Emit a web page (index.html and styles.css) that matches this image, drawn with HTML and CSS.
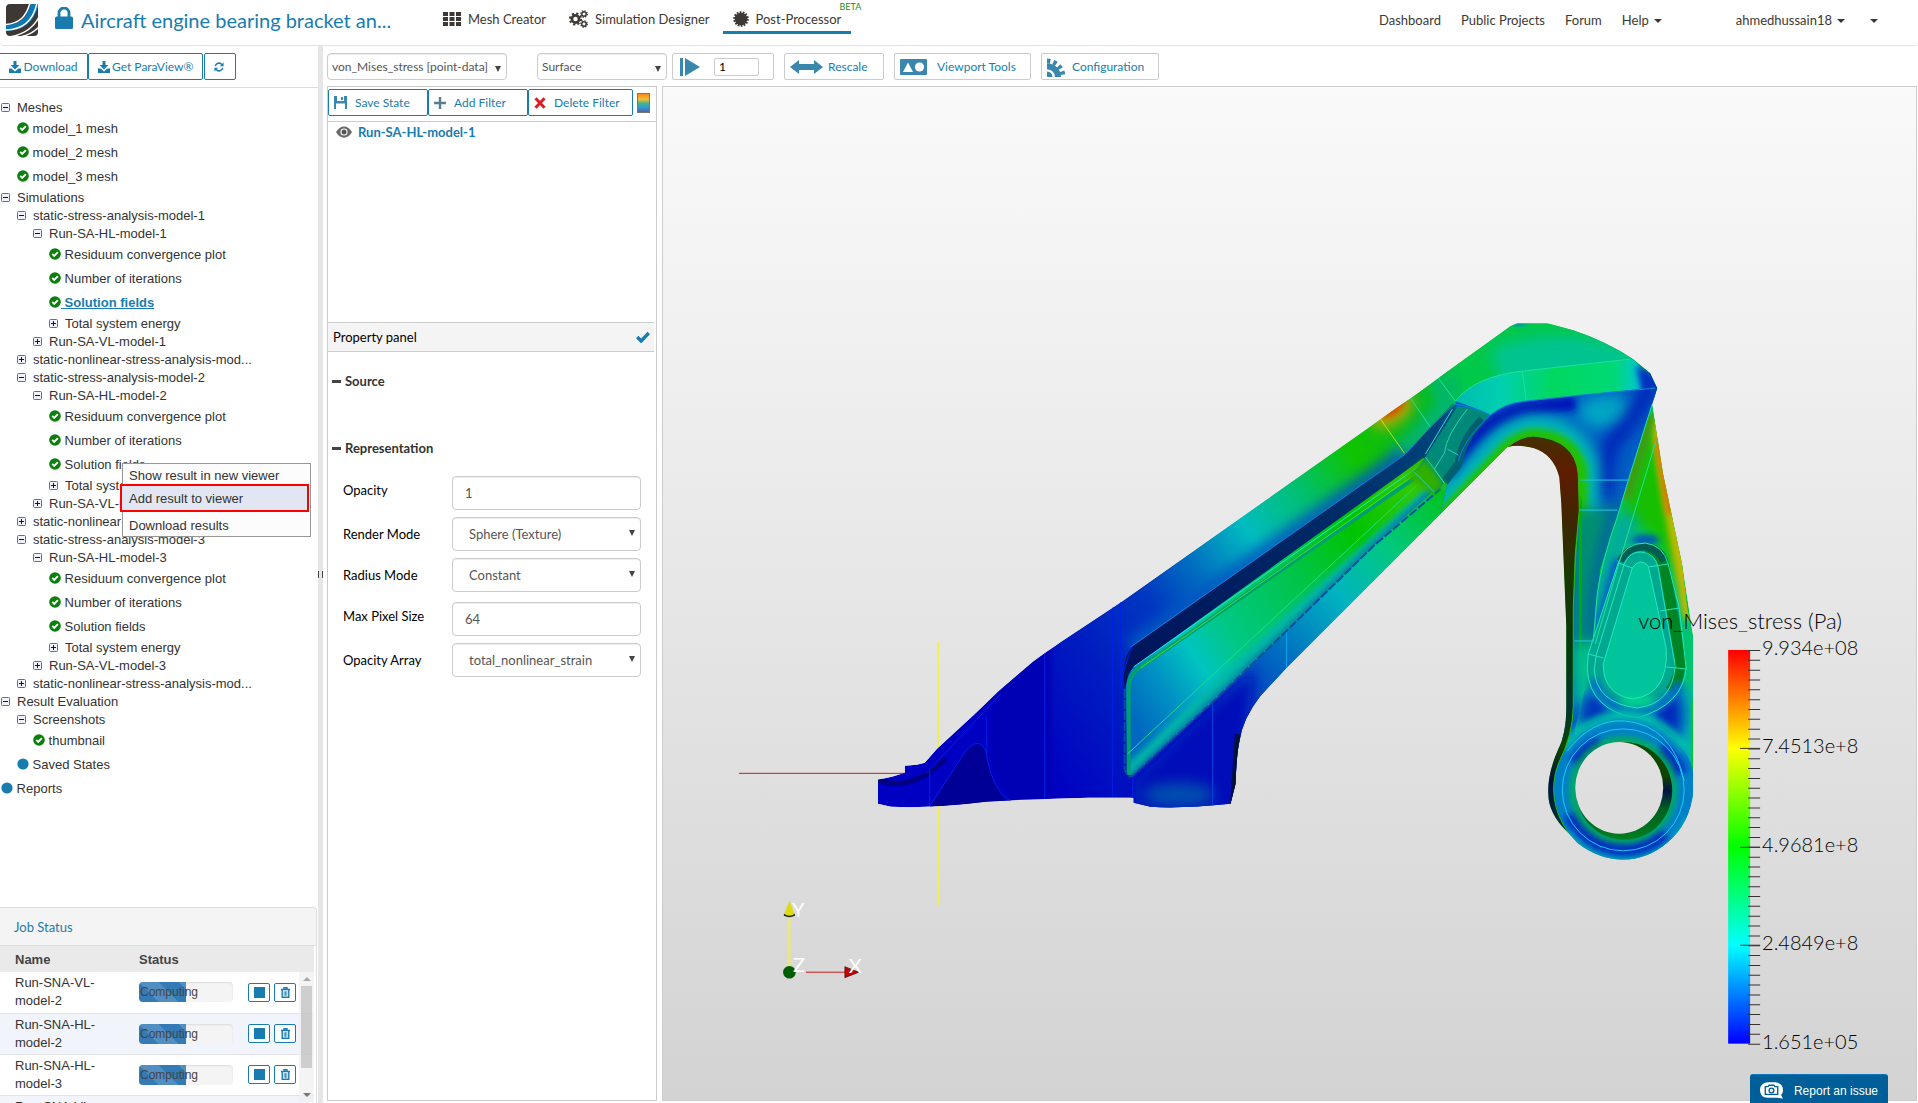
FILE: index.html
```html
<!DOCTYPE html>
<html lang="en">
<head>
    <meta charset="UTF-8">
    <meta name="viewport" content="width=device-width, initial-scale=1.0">
    <title>Post-Processor</title>
    <link rel="stylesheet" href="styles.css">
</head>
<body>

    <!-- Icon sprite -->
    <svg class="sprite" aria-hidden="true">
        <symbol id="i-minus" viewBox="0 0 9 9">
            <rect x=".5" y=".5" width="8" height="8" rx="1" fill="#eef0fa" stroke="#5a6bb0"/>
            <path d="M2 4.5h5" stroke="#00c"/>
        </symbol>
        <symbol id="i-plus" viewBox="0 0 9 9">
            <rect x=".5" y=".5" width="8" height="8" rx="1" fill="#eef0fa" stroke="#5a6bb0"/>
            <path d="M2 4.5h5M4.500 2v5" stroke="#00c"/>
        </symbol>
        <symbol id="i-ok" viewBox="0 0 12 12">
            <circle cx="6" cy="6" r="5.800" fill="#0a800a"/>
            <path d="M3.200 5.800l2 2 3.700-3.700" fill="none" stroke="#fff" stroke-width="1.900"/>
        </symbol>
        <symbol id="i-dot" viewBox="0 0 12 12"><circle cx="6" cy="6" r="5.600" fill="#187caf"/></symbol>
        <symbol id="i-download" viewBox="0 0 12 12">
            <path d="M4.500 0h3v4h3L6 8.500 1.500 4h3zM0 7.500h2.500L6 10.500l3.500-3H12V12H0z" fill="currentColor"/>
        </symbol>
        <symbol id="i-refresh" viewBox="0 0 12 12">
            <path d="M1.500 5A4.600 4.600 0 0 1 9.500 3M10.500 7A4.600 4.600 0 0 1 2.500 9" fill="none" stroke="currentColor" stroke-width="1.800"/>
            <path d="M11.500 .5V5H7zM.5 11.500V7H5z" fill="currentColor"/>
        </symbol>
        <symbol id="i-trash" viewBox="0 0 10 11">
            <path d="M.5 2.500h9M3.500 2V.7h3V2M1.700 3v7.300h6.600V3" fill="none" stroke="currentColor" stroke-width="1.400"/>
            <path d="M3.700 4.200v4.600M5 4.200v4.600M6.300 4.200v4.600" stroke="currentColor" stroke-width=".8"/>
        </symbol>
        <symbol id="i-stop" viewBox="0 0 10 10"><path d="M0 0h10v10H0z" fill="currentColor"/></symbol>
    </svg>

    <header class="header">
        <div class="brand">
            <svg class="logo" viewBox="0 0 32 32">
                <rect width="32" height="32" rx="4" fill="#3d3833"/>
                <path d="M-1 21C14 21 21 14 25-1h8C29 18 18 27-1 27z" fill="#0b79b5"/>
                <path d="M-1 20.500C13 20 20 13 24-1M-1 26C16 26 27 18 31-1M3 33C16 31 27 25 33 13M13 33c8-1 15-5 20-10" fill="none" stroke="#fff" stroke-width="1.500"/>
            </svg>
            <svg class="lock" viewBox="0 0 18 22">
                <path d="M4 10V6a5 5 0 0 1 10 0v4" fill="none" stroke="#187caf" stroke-width="2.800"/>
                <rect y="9.500" width="18" height="12.500" rx="1.500" fill="#187caf"/>
            </svg>
            <a class="title" href="#">Aircraft engine bearing bracket an...</a>
        </div>
        <nav class="tabs">
            <a href="#">
                <svg width="18" height="14" viewBox="0 0 18 14" fill="#3d3833">
                    <path d="M0 0h5v4H0zM6.500 0h5v4h-5zM13 0h5v4h-5zM0 5h5v4H0zM6.500 5h5v4h-5zM13 5h5v4h-5zM0 10h5v4H0zM6.500 10h5v4h-5zM13 10h5v4h-5z"/>
                </svg>
                Mesh Creator
            </a>
            <a href="#">
                <svg width="19" height="18" viewBox="0 0 19 18">
                    <g fill="none" stroke="#3d3833">
                        <circle cx="6.500" cy="9" r="3.600" stroke-width="2.600"/>
                        <circle cx="6.500" cy="9" r="5.600" stroke-width="2" stroke-dasharray="2.200 2.200"/>
                        <circle cx="15" cy="4" r="2.200" stroke-width="1.500"/>
                        <circle cx="15" cy="4" r="3.300" stroke-width="1.200" stroke-dasharray="1.300 1.300"/>
                        <circle cx="15" cy="14" r="2.200" stroke-width="1.500"/>
                        <circle cx="15" cy="14" r="3.300" stroke-width="1.200" stroke-dasharray="1.300 1.300"/>
                    </g>
                </svg>
                Simulation Designer
            </a>
            <a class="active" href="#">
                <svg width="16" height="16" viewBox="-8 -8 16 16">
                    <circle r="6.300" fill="#3d3833"/>
                    <circle r="6.800" fill="none" stroke="#3d3833" stroke-width="2" stroke-dasharray="1.800 1.250"/>
                </svg>
                Post-Processor
                <span class="beta">BETA</span>
            </a>
        </nav>
        <nav class="links">
            <a href="#">Dashboard</a>
            <a href="#">Public Projects</a>
            <a href="#">Forum</a>
            <a href="#" class="caret">Help</a>
            <a href="#" class="caret user">ahmedhussain18</a>
            <a href="#" class="caret more" aria-label="More"></a>
        </nav>
    </header>

    <main class="main">
        <aside class="sidebar">
            <div class="sidebar-tools">
                <button class="btn btn-download"><svg class="ic"><use href="#i-download"/></svg>Download</button>
                <button class="btn"><svg class="ic"><use href="#i-download"/></svg>Get ParaView®</button>
                <button class="btn btn-refresh" aria-label="Refresh"><svg class="ic"><use href="#i-refresh"/></svg></button>
            </div>

            <div class="tree">
                <ul>
                    <li><span class="node"><svg><use href="#i-minus"/></svg>Meshes</span>
                        <ul>
                            <li><a class="leaf" href="#"><svg><use href="#i-ok"/></svg>&nbsp;model_1 mesh</a></li>
                            <li><a class="leaf" href="#"><svg><use href="#i-ok"/></svg>&nbsp;model_2 mesh</a></li>
                            <li><a class="leaf" href="#"><svg><use href="#i-ok"/></svg>&nbsp;model_3 mesh</a></li>
                        </ul>
                    </li>
                    <li><span class="node"><svg><use href="#i-minus"/></svg>Simulations</span>
                        <ul>
                            <li><span class="node"><svg><use href="#i-minus"/></svg>static-stress-analysis-model-1</span>
                                <ul>
                                    <li><span class="node"><svg><use href="#i-minus"/></svg>Run-SA-HL-model-1</span>
                                        <ul>
                                            <li><a class="leaf" href="#"><svg><use href="#i-ok"/></svg>&nbsp;Residuum convergence plot</a></li>
                                            <li><a class="leaf" href="#"><svg><use href="#i-ok"/></svg>&nbsp;Number of iterations</a></li>
                                            <li><a class="leaf selected" href="#"><svg><use href="#i-ok"/></svg><span>&nbsp;Solution fields</span></a></li>
                                            <li><span class="node"><svg><use href="#i-plus"/></svg>Total system energy</span></li>
                                        </ul>
                                    </li>
                                    <li><span class="node"><svg><use href="#i-plus"/></svg>Run-SA-VL-model-1</span></li>
                                </ul>
                            </li>
                            <li><span class="node"><svg><use href="#i-plus"/></svg>static-nonlinear-stress-analysis-mod...</span></li>
                            <li><span class="node"><svg><use href="#i-minus"/></svg>static-stress-analysis-model-2</span>
                                <ul>
                                    <li><span class="node"><svg><use href="#i-minus"/></svg>Run-SA-HL-model-2</span>
                                        <ul>
                                            <li><a class="leaf" href="#"><svg><use href="#i-ok"/></svg>&nbsp;Residuum convergence plot</a></li>
                                            <li><a class="leaf" href="#"><svg><use href="#i-ok"/></svg>&nbsp;Number of iterations</a></li>
                                            <li class="has-menu"><a class="leaf" href="#"><svg><use href="#i-ok"/></svg>&nbsp;Solution fields</a>
                                                <div class="context-menu">
                                                    <button>Show result in new viewer</button>
                                                    <button class="highlight">Add result to viewer</button>
                                                    <button>Download results</button>
                                                </div>
                                            </li>
                                            <li><span class="node"><svg><use href="#i-plus"/></svg>Total system energy</span></li>
                                        </ul>
                                    </li>
                                    <li><span class="node"><svg><use href="#i-plus"/></svg>Run-SA-VL-model-2</span></li>
                                </ul>
                            </li>
                            <li><span class="node"><svg><use href="#i-plus"/></svg>static-nonlinear-stress-analysis-mod...</span></li>
                            <li><span class="node"><svg><use href="#i-minus"/></svg>static-stress-analysis-model-3</span>
                                <ul>
                                    <li><span class="node"><svg><use href="#i-minus"/></svg>Run-SA-HL-model-3</span>
                                        <ul>
                                            <li><a class="leaf" href="#"><svg><use href="#i-ok"/></svg>&nbsp;Residuum convergence plot</a></li>
                                            <li><a class="leaf" href="#"><svg><use href="#i-ok"/></svg>&nbsp;Number of iterations</a></li>
                                            <li><a class="leaf" href="#"><svg><use href="#i-ok"/></svg>&nbsp;Solution fields</a></li>
                                            <li><span class="node"><svg><use href="#i-plus"/></svg>Total system energy</span></li>
                                        </ul>
                                    </li>
                                    <li><span class="node"><svg><use href="#i-plus"/></svg>Run-SA-VL-model-3</span></li>
                                </ul>
                            </li>
                            <li><span class="node"><svg><use href="#i-plus"/></svg>static-nonlinear-stress-analysis-mod...</span></li>
                        </ul>
                    </li>
                    <li><span class="node"><svg><use href="#i-minus"/></svg>Result Evaluation</span>
                        <ul>
                            <li><span class="node"><svg><use href="#i-minus"/></svg>Screenshots</span>
                                <ul>
                                    <li><a class="leaf" href="#"><svg><use href="#i-ok"/></svg>&nbsp;thumbnail</a></li>
                                </ul>
                            </li>
                            <li><a class="leaf" href="#"><svg><use href="#i-dot"/></svg>&nbsp;Saved States</a></li>
                        </ul>
                    </li>
                    <li><a class="leaf" href="#"><svg><use href="#i-dot"/></svg>&nbsp;Reports</a></li>
                </ul>
            </div>

            <section class="jobs">
                <h2>Job Status</h2>
                <div class="jobs-body">
                    <table>
                        <thead>
                            <tr><th class="col-name">Name</th><th class="col-status">Status</th><th></th></tr>
                        </thead>
                        <tbody>
                            <tr>
                                <td>Run-SNA-VL-model-2</td>
                                <td><div class="progress"><i></i><span>Computing</span></div></td>
                                <td><div class="actions"><button aria-label="Stop"><svg><use href="#i-stop"/></svg></button><button aria-label="Delete"><svg><use href="#i-trash"/></svg></button></div></td>
                            </tr>
                            <tr>
                                <td>Run-SNA-HL-model-2</td>
                                <td><div class="progress"><i></i><span>Computing</span></div></td>
                                <td><div class="actions"><button aria-label="Stop"><svg><use href="#i-stop"/></svg></button><button aria-label="Delete"><svg><use href="#i-trash"/></svg></button></div></td>
                            </tr>
                            <tr>
                                <td>Run-SNA-HL-model-3</td>
                                <td><div class="progress"><i></i><span>Computing</span></div></td>
                                <td><div class="actions"><button aria-label="Stop"><svg><use href="#i-stop"/></svg></button><button aria-label="Delete"><svg><use href="#i-trash"/></svg></button></div></td>
                            </tr>
                            <tr>
                                <td>Run-SNA-VL-model-3</td>
                                <td></td>
                                <td></td>
                            </tr>
                        </tbody>
                    </table>
                    <div class="scrollbar"><i></i></div>
                </div>
            </section>
        </aside>

        <div class="splitter"></div>

        <section class="workspace">
            <div class="toolbar">
                <div class="select field-select">
                    <select aria-label="Field"><option>von_Mises_stress [point-data]</option></select>
                </div>
                <div class="select repr-select">
                    <select aria-label="Representation"><option>Surface</option></select>
                </div>
                <div class="tool player">
                    <svg width="20" height="18" viewBox="0 0 20 18" fill="#3a87ad"><path d="M0 0h3v18H0zM5 0l15 9L5 18z"/></svg>
                    <input type="text" value="1" aria-label="Time step">
                </div>
                <button class="tool rescale">
                    <svg width="33" height="14" viewBox="0 0 33 14" fill="#3a87ad"><path d="M0 7l9-7v4h15V0l9 7-9 7v-4H9v4z"/></svg>
                    Rescale
                </button>
                <button class="tool viewport-tools">
                    <svg width="27" height="16" viewBox="0 0 27 16"><rect width="27" height="16" rx="1" fill="#3a87ad"/><path d="M3 13L8 3.500l5 9.500z" fill="#fff"/><circle cx="19.500" cy="8" r="4.600" fill="#fff"/></svg>
                    Viewport Tools
                </button>
                <button class="tool config">
                    <svg width="20" height="20" viewBox="0 0 20 20" fill="none" stroke="#3a87ad">
                        <path d="M0 9.500A10.500 10.500 0 0 1 11 20" stroke-width="6"/>
                        <path d="M0 4A16 16 0 0 1 16 20" stroke-width="5" stroke-dasharray="3.400 3"/>
                        <path d="M0 17a3 3 0 0 1 3 3" stroke-width="5"/>
                    </svg>
                    Configuration
                </button>
            </div>

            <div class="stage">
                <div class="panel">
                    <div class="filters">
                        <button class="btn save">
                            <svg width="13" height="13" viewBox="0 0 13 13"><path d="M0 0h13v13H0z" fill="#3a87ad"/><path d="M3 0h7v5H3zM2 7.500h9V13H2z" fill="#fff"/><path d="M7 1h2v3H7z" fill="#3a87ad"/></svg>
                            Save State
                        </button>
                        <button class="btn add">
                            <svg width="12" height="12" viewBox="0 0 12 12"><path d="M6 0v12M0 6h12" stroke="#5a7f92" stroke-width="2.400"/></svg>
                            Add Filter
                        </button>
                        <button class="btn delete">
                            <svg width="12" height="12" viewBox="0 0 12 12"><path d="M1.500 1.200l9 9.600M10.500 1.200l-9 9.600" stroke="#dd1c24" stroke-width="3"/></svg>
                            Delete Filter
                        </button>
                        <span class="colormap"></span>
                    </div>
                    <div class="pipeline">
                        <a href="#">
                            <svg width="16" height="12" viewBox="0 0 16 12"><path d="M0 6C4-1.500 12-1.500 16 6 12 13.500 4 13.500 0 6z" fill="#6a6a6a"/><circle cx="8" cy="6" r="3.600" fill="#fff"/><circle cx="8" cy="6" r="2.500" fill="#555"/></svg>
                            Run-SA-HL-model-1
                        </a>
                    </div>
                    <div class="panel-head">
                        <span>Property panel</span>
                        <svg width="14" height="12" viewBox="0 0 14 12"><path d="M1.200 6l4 4L12.800 2" fill="none" stroke="#187caf" stroke-width="3.400"/></svg>
                    </div>
                    <h3 class="group group-source">Source</h3>
                    <h3 class="group">Representation</h3>
                    <form class="props">
                        <div class="row">
                            <label for="opacity">Opacity</label>
                            <input id="opacity" type="text" value="1">
                        </div>
                        <div class="row">
                            <label for="render">Render Mode</label>
                            <div class="select"><select id="render"><option>Sphere (Texture)</option></select></div>
                        </div>
                        <div class="row">
                            <label for="radius">Radius Mode</label>
                            <div class="select"><select id="radius"><option>Constant</option></select></div>
                        </div>
                        <div class="row">
                            <label for="pixel">Max Pixel Size</label>
                            <input id="pixel" type="text" value="64">
                        </div>
                        <div class="row">
                            <label for="array">Opacity Array</label>
                            <div class="select"><select id="array"><option>total_nonlinear_strain</option></select></div>
                        </div>
                    </form>
                </div>

                <div class="viewer">
                    <svg class="scene" viewBox="662 88 1254 1013" preserveAspectRatio="xMidYMid meet">
                        <defs>
                            <linearGradient id="bg" gradientUnits="userSpaceOnUse" x1="0" y1="88" x2="0" y2="1101">
                                <stop offset="0" stop-color="#fafafa"/><stop offset="1" stop-color="#d3d3d3"/>
                            </linearGradient>
                            <linearGradient id="arm" gradientUnits="userSpaceOnUse" x1="1000" y1="720" x2="1490" y2="380">
                                <stop offset="0" stop-color="#0000c2"/><stop offset=".18" stop-color="#001cc0"/>
                                <stop offset=".32" stop-color="#0038c0"/><stop offset=".42" stop-color="#0074c0"/>
                                <stop offset=".52" stop-color="#00bcc0"/><stop offset=".63" stop-color="#00c070"/>
                                <stop offset=".74" stop-color="#10c400"/><stop offset=".86" stop-color="#08b820"/>
                                <stop offset="1" stop-color="#00c840"/>
                            </linearGradient>
                            <linearGradient id="lower" gradientUnits="userSpaceOnUse" x1="1220" y1="730" x2="1500" y2="450">
                                <stop offset="0" stop-color="#0020c0"/><stop offset=".25" stop-color="#0070c0"/>
                                <stop offset=".45" stop-color="#00b4c0"/><stop offset=".62" stop-color="#00c880"/>
                                <stop offset=".82" stop-color="#00c420"/><stop offset="1" stop-color="#50c400"/>
                            </linearGradient>
                            <linearGradient id="groove" gradientUnits="userSpaceOnUse" x1="1130" y1="660" x2="1450" y2="410">
                                <stop offset="0" stop-color="#00145c"/><stop offset=".6" stop-color="#002a66"/>
                                <stop offset="1" stop-color="#004880"/>
                            </linearGradient>
                            <linearGradient id="pocket" gradientUnits="userSpaceOnUse" x1="1118" y1="700" x2="1420" y2="500">
                                <stop offset="0" stop-color="#0068c0"/><stop offset=".12" stop-color="#0090c4"/>
                                <stop offset=".24" stop-color="#00c4c0"/><stop offset=".36" stop-color="#00c884"/>
                                <stop offset=".6" stop-color="#00c448"/><stop offset=".8" stop-color="#00c400"/>
                                <stop offset="1" stop-color="#34c800"/>
                            </linearGradient>
                            <linearGradient id="inner" gradientUnits="userSpaceOnUse" x1="0" y1="440" x2="0" y2="835">
                                <stop offset="0" stop-color="#443000"/><stop offset=".08" stop-color="#601c00"/>
                                <stop offset=".2" stop-color="#402600"/><stop offset=".34" stop-color="#1c3800"/>
                                <stop offset=".55" stop-color="#003a10"/><stop offset=".68" stop-color="#003434"/>
                                <stop offset=".78" stop-color="#104400"/><stop offset=".87" stop-color="#001040"/>
                                <stop offset="1" stop-color="#003c30"/>
                            </linearGradient>
                            <linearGradient id="bore" gradientUnits="userSpaceOnUse" x1="0" y1="742" x2="0" y2="842">
                                <stop offset="0" stop-color="#104c00"/><stop offset=".35" stop-color="#104400"/>
                                <stop offset=".5" stop-color="#001444"/><stop offset=".68" stop-color="#006020"/>
                                <stop offset="1" stop-color="#008020"/>
                            </linearGradient>
                            <linearGradient id="fillet" gradientUnits="userSpaceOnUse" x1="1450" y1="0" x2="1655" y2="0">
                                <stop offset="0" stop-color="#00b8b0"/><stop offset=".25" stop-color="#00d0b0"/>
                                <stop offset=".5" stop-color="#00d860"/><stop offset=".8" stop-color="#00d878"/>
                                <stop offset=".92" stop-color="#00c8d0"/><stop offset="1" stop-color="#0030c0"/>
                            </linearGradient>
                            <linearGradient id="scale" x1="0" y1="0" x2="0" y2="1">
                                <stop offset="0" stop-color="#f00"/><stop offset=".25" stop-color="#ff0"/>
                                <stop offset=".5" stop-color="#0f0"/><stop offset=".75" stop-color="#0ff"/>
                                <stop offset="1" stop-color="#00f"/>
                            </linearGradient>
                            <filter id="b3" x="-50%" y="-50%" width="200%" height="200%"><feGaussianBlur stdDeviation="3"/></filter>
                            <filter id="b7" x="-50%" y="-50%" width="200%" height="200%"><feGaussianBlur stdDeviation="7"/></filter>
                            <clipPath id="body-clip"><use href="#body"/></clipPath>
                            <clipPath id="web-clip"><use href="#web"/></clipPath>
                            <clipPath id="head-clip"><use href="#head-low"/></clipPath>
                            <clipPath id="leg-clip"><use href="#leg-face"/></clipPath>
                            <path id="body" d="M877 781L891 778 904 774V767L916 766 924 764 936 750 974 715 998 692 1032 663 1043 655 1060 643 1122 602 1380 420 1410 399 1510 327 1517 324H1547L1573 331Q1606 342 1633 360L1650 374 1657 389 1652 405 1663 475 1682 565 1693 638V793Q1690 825 1667 844 1647 861 1622 861 1597 860 1577 844L1567 833Q1548 815 1548 795 1547 775 1558 750 1566 735 1566 707V627L1561 504 1559 478Q1553 455 1533 449 1518 445 1507 448L1286 669 1260 697Q1242 720 1239 742 1236 755 1235 785L1230 805Q1180 810 1150 808L1133 804V799H1088L1020 801 985 803Q930 810 890 808L877 805z"/>
                            <path id="web" d="M1127 776L1125 690Q1126 672 1137 665L1423 459 1445 490 1432 493 1373 547 1285 633 1212 703 1132 777z"/>
                            <path id="head-low" d="M1455 402Q1475 408 1490 416 1504 404 1525 402L1580 396 1657 388 1652 405 1630 475 1617 518 1600 569 1595 609 1593 655 1590 740H1560L1573 707V609L1579 511 1578 475Q1571 437 1533 437 1518 438 1506 449L1440 515 1448 480 1460 450z"/>
                            <path id="leg-face" d="M1652 405L1630 475 1617 518Q1602 560 1597 595L1593 655 1575 730 1575 800H1693V638L1687 609 1682 565 1663 475z"/>
                        </defs>

                        <!-- Domain axes -->
                        <path d="M738 774.500H905" stroke="#d81818"/>
                        <path d="M937.500 643V907" stroke="#f0ee50" stroke-width="1.500"/>

                        <g clip-path="url(#body-clip)">
                            <use href="#body" fill="url(#arm)"/>

                            <!-- Left foot -->
                            <path d="M929 808L965 752Q978 737 985 752 992 795 1012 803z" fill="#000096"/>
                            <path d="M990 700V760Q1000 795 1012 803H1050V640z" fill="#0000b4" filter="url(#b3)"/>
                            <path d="M877 781Q900 790 925 776L945 760" fill="none" stroke="#000080" stroke-width="5"/>

                            <!-- Hot spots on the upper edge -->
                            <ellipse cx="1392" cy="412" rx="24" ry="12" transform="rotate(-35 1392 412)" fill="#c4a800" filter="url(#b7)"/>
                            <ellipse cx="1392" cy="409" rx="14" ry="7" transform="rotate(-35 1392 409)" fill="#d05000" filter="url(#b3)"/>
                            <path d="M1395 458L1450 402 1436 380" fill="none" stroke="#00b0a0" stroke-width="10" filter="url(#b7)"/>
                            <path d="M1130 648L1405 455" stroke="#0058c0" stroke-width="16" filter="url(#b7)"/>
                            <path d="M1440 376L1475 352" stroke="#68b000" stroke-width="8" filter="url(#b3)"/>

                            <!-- Lower flange -->
                            <path d="M1132 777L1212 703 1285 633 1373 547 1445 480 1470 430 1520 440 1286 675 1240 740V810H1132z" fill="url(#lower)"/>
                            <path d="M1135 782L1215 705 1255 670 1245 730V812H1135z" fill="#0010b8" filter="url(#b7)"/>
                            <ellipse cx="1178" cy="796" rx="36" ry="12" fill="#0050b0" filter="url(#b7)"/>
                            <path d="M1212 703V808" stroke="#0040e0"/>
                            <path d="M1237 735L1232 806" stroke="#001038" stroke-width="5"/>

                            <!-- Recessed web -->
                            <path d="M1124 690Q1120 660 1132 647L1405 455 1430 428 1452 405 1460 407 1425 460 1137 666 1128 690z" fill="url(#groove)"/>
                            <use href="#web" fill="url(#pocket)"/>
                            <g clip-path="url(#web-clip)">
                                <path d="M1125 775L1300 610 1440 484" fill="none" stroke="#00b8a8" stroke-width="12" filter="url(#b3)"/>
                                <path d="M1125 784L1285 633 1373 547 1440 485" fill="none" stroke="#0068a8" stroke-width="5" filter="url(#b3)"/>
                            </g>
                            <path d="M1128 776V690Q1128 675 1140 668L1420 475" fill="none" stroke="#00a070" stroke-width="4"/>
                            <path d="M1124 690V770Q1126 779 1132 777L1212 703 1285 633 1373 547 1440 490" fill="none" stroke="#0050a0" stroke-width="2" stroke-dasharray="9 2"/>
                            <path d="M1133 668L1423 464M1452 410L1425 455" stroke="#20e8d0" fill="none"/>
                            <path d="M1140 669L1418 473" stroke="#40e030"/>
                            <path d="M1127 755L1420 483" stroke="#10e090"/>

                            <!-- Head -->
                            <path d="M1438 379L1510 320H1660V400L1455 404z" fill="#00c848"/>
                            <path d="M1490 350Q1560 320 1640 355L1625 372 1500 385z" fill="#00c490" filter="url(#b7)"/>
                            <path d="M1440 378L1455 402" stroke="#00b860" stroke-width="24" filter="url(#b7)"/>
                            <path d="M1455 402Q1475 377 1522 372L1633 360 1657 388 1580 396 1525 402Q1504 404 1490 416z" fill="url(#fillet)"/>
                            <path d="M1636 366L1660 376V410L1642 394z" fill="#0030c0" filter="url(#b3)"/>
                            <path d="M1512 324L1525 326" stroke="#0090c0" stroke-width="6" filter="url(#b3)"/>
                            <use href="#head-low" fill="#0060c4"/>
                            <g clip-path="url(#head-clip)">
                                <ellipse cx="1606" cy="413" rx="28" ry="17" fill="#00a4c4" filter="url(#b7)"/>
                                <path d="M1452 480Q1470 425 1525 410L1575 404" fill="none" stroke="#0018b8" stroke-width="15" filter="url(#b3)"/>
                                <path d="M1652 380Q1640 412 1622 432 1602 446 1604 500" fill="none" stroke="#0028b8" stroke-width="18" filter="url(#b7)"/>
                                <path d="M1440 515L1506 447Q1520 436 1533 435 1570 435 1580 470V520" fill="none" stroke="#00b8b8" stroke-width="38" filter="url(#b7)"/>
                                <path d="M1440 520L1506 450Q1520 437 1533 437 1570 437 1580 470V520" fill="none" stroke="#20c000" stroke-width="15" filter="url(#b3)"/>
                                <path d="M1573 510h60l-30 170h-30z" fill="#009070" filter="url(#b7)"/>
                                <path d="M1580 500L1581 660" stroke="#00b000" stroke-width="16" filter="url(#b3)"/>
                                <path d="M1620 500Q1596 560 1592 640" fill="none" stroke="#0060a8" stroke-width="12" filter="url(#b7)"/>
                                <path d="M1573 645h25v60h-25z" fill="#00c090" filter="url(#b7)"/>
                            </g>

                            <!-- Ramp between web and head -->
                            <path d="M1457 407Q1475 408 1490 416 1468 436 1460 462L1443 485 1434 494 1414 473 1425 458z" fill="#008878"/>
                            <path d="M1482 420Q1462 440 1458 465L1444 483" fill="none" stroke="#006070" stroke-width="8"/>
                            <path d="M1405 478L1425 460 1444 486 1432 495z" fill="#30b000" filter="url(#b3)"/>
                            <path d="M1467 410Q1446 436 1444 454L1434 470 1444 484M1425 458L1444 484M1414 473L1434 493M1447 450L1458 456" fill="none" stroke="#20d8b0"/>

                            <!-- Leg side face -->
                            <use href="#leg-face" fill="#00c470"/>
                            <g clip-path="url(#leg-clip)">
                                <path d="M1652 405L1622 515 1655 540 1690 600 1680 500z" fill="#18c000" filter="url(#b7)"/>
                                <path d="M1656 420L1690 620" stroke="#c0b800" stroke-width="14" filter="url(#b3)"/>
                                <path d="M1659 438L1671 515" stroke="#d87800" stroke-width="10" filter="url(#b3)"/>
                                <path d="M1650 415L1640 450 1625 500" fill="none" stroke="#409c10" stroke-width="12" filter="url(#b3)"/>
                                <path d="M1630 515L1600 590 1592 650" fill="none" stroke="#00a8a0" stroke-width="18" filter="url(#b7)"/>
                                <path d="M1618 560L1596 640" stroke="#0060c8" stroke-width="10" filter="url(#b3)"/>
                                <ellipse cx="1645" cy="541" rx="14" ry="5" fill="#0050c0" filter="url(#b3)"/>
                                <path d="M1575 690H1693V800H1575z" fill="#00b0c0" filter="url(#b7)"/>
                                <ellipse cx="1595" cy="716" rx="16" ry="24" fill="#0030bc" filter="url(#b7)"/>
                                <ellipse cx="1668" cy="716" rx="15" ry="30" fill="#0028bc" filter="url(#b7)"/>
                                <path d="M1693 700L1692 790" stroke="#00c820" stroke-width="12" filter="url(#b3)"/>
                            </g>

                            <!-- Triangular pocket -->
                            <path d="M1618 564Q1624 544 1645 544 1663 546 1668 565L1679 609 1686 669Q1683 706 1637 719 1590 712 1587 671L1588 655z" fill="#00a890"/>
                            <path d="M1645 549Q1660 550 1664 567L1680 660Q1680 680 1670 692" fill="none" stroke="#008424" stroke-width="11"/>
                            <path d="M1620 562Q1628 547 1645 548 1658 550 1664 562" fill="none" stroke="#005c50" stroke-width="7"/>
                            <path d="M1593 680Q1600 708 1637 713 1670 706 1680 684" fill="none" stroke="#0070c8" stroke-width="10" filter="url(#b3)"/>
                            <path d="M1632 569Q1640 558 1648 567L1666 649Q1669 695 1633 700 1603 696 1603 665z" fill="#00c49c"/>
                            <ellipse cx="1637" cy="702" rx="18" ry="6" fill="#00d090" filter="url(#b3)"/>
                            <g fill="none" stroke="#20e8c0">
                                <path d="M1618 564Q1624 544 1645 544 1663 546 1668 565L1679 609 1686 669Q1683 706 1637 719 1590 712 1587 671L1588 655z"/>
                                <path d="M1624 565Q1630 552 1641 553 1655 554 1658 569L1675 667Q1672 705 1637 709 1596 704 1594 671L1596 656z"/>
                                <path d="M1632 569Q1640 558 1648 567L1666 649Q1669 695 1633 700 1603 696 1603 665z"/>
                                <path d="M1588 655L1603 659M1618 564L1632 569M1648 568L1668 565M1660 612L1679 609M1666 668L1686 670"/>
                            </g>

                            <!-- Lug ring -->
                            <circle cx="1623" cy="790" r="60" fill="none" stroke="#0080c8" stroke-width="24"/>
                            <path d="M1575 765A55 55 0 0 1 1600 744M1660 750A55 55 0 0 1 1680 775M1570 815A60 60 0 0 0 1665 835" fill="none" stroke="#0030c0" stroke-width="15" filter="url(#b3)"/>
                            <path d="M1562 750A73 73 0 0 1 1685 750M1565 835A72 72 0 0 0 1690 820" fill="none" stroke="#00c0a8" stroke-width="8" filter="url(#b3)"/>
                            <circle cx="1623" cy="791" r="50" fill="none" stroke="#00b840" stroke-width="6" filter="url(#b3)"/>
                            <g fill="none" stroke="#20c8f0">
                                <path d="M1567 752Q1592 720 1624 722 1672 726 1684 782"/>
                                <circle cx="1623" cy="791" r="61"/>
                            </g>
                            <ellipse cx="1624" cy="792" rx="48" ry="49" fill="url(#bore)"/>
                            <ellipse cx="1619" cy="789" rx="44" ry="46" fill="url(#bg)"/>

                            <!-- Inner side wall -->
                            <path d="M1506 449Q1520 437 1533 437 1575 440 1578 475L1579 511 1575 555 1573 609V707Q1573 735 1558 765 1545 800 1568 834L1540 830V760L1560 700V504L1555 470 1533 452z" fill="url(#inner)"/>
                            <path d="M1506 449Q1520 437 1533 437 1575 440 1578 475L1579 511 1575 555 1573 609V707Q1573 735 1558 765 1545 800 1568 834" fill="none" stroke="#30b810"/>

                            <!-- Feature edges -->
                            <g fill="none" stroke="#20e0a0">
                                <path d="M1455 402Q1475 377 1522 372L1630 360M1522 372L1526 402M1438 379L1455 402M1410 399L1430 428"/>
                                <path d="M1652 405L1630 475 1617 518Q1602 560 1597 595L1593 642M1656 441L1620 560 1595 645"/>
                                <path d="M1580 481H1629M1579 511H1617M1574 642H1593" stroke="#20c8e0"/>
                                <path d="M1380 420L1404 454" stroke="#c0e020"/>
                            </g>
                            <path d="M1490 416Q1504 404 1525 402L1580 396 1655 389M1455 405Q1478 409 1490 416 1463 440 1458 462M1130 648L1405 455 1430 428 1455 404" fill="none" stroke="#0c80e0"/>
                            <path d="M1044 655V800M1112 608V798M1120 603V690Q1122 670 1132 647M929 772V807L965 752Q978 737 985 752 992 795 1012 803M986 717V760M925 775L1000 695M1132 780V800" fill="none" stroke="#0020e8"/>
                            <path d="M1286 633V669" stroke="#00a0e8"/>
                        </g>

                        <!-- Orientation triad -->
                        <path d="M788.500 917V968" stroke="#f0ee50" stroke-width="2"/>
                        <path d="M805 973.500H845" stroke="#d01818"/>
                        <path d="M788.500 902L794 916Q788.500 920 783 916z" fill="#dcdc10"/>
                        <path d="M783 915Q788.500 919 794 915V917Q788.500 920 783 917z" fill="#222"/>
                        <path d="M858 973.500L844 968V979z" fill="#c80000" stroke="#300" stroke-width=".6"/>
                        <circle cx="788.500" cy="973.500" r="6.300" fill="#005c00"/>
                        <g class="axis-label">
                            <text x="791" y="918">Y</text>
                            <text x="792" y="973">Z</text>
                            <text x="848" y="974">X</text>
                        </g>

                        <!-- Colour legend -->
                        <rect x="1728" y="651" width="22" height="394" fill="url(#scale)"/>
                        <path d="M1754 651V1046" stroke="#333" stroke-width="12" stroke-dasharray="1 8.850"/>
                        <path d="M1740 749.500h20M1740 848.500h20M1740 946.500h20" stroke="#333"/>
                        <g class="legend">
                            <text class="legend-title" x="1638" y="630">von_Mises_stress (Pa)</text>
                            <text x="1762" y="656">9.934e+08</text>
                            <text x="1762" y="754">7.4513e+8</text>
                            <text x="1762" y="853">4.9681e+8</text>
                            <text x="1762" y="951">2.4849e+8</text>
                            <text x="1762" y="1050">1.651e+05</text>
                        </g>
                    </svg>
                </div>
            </div>
        </section>
    </main>

    <button class="report">
        <svg width="24" height="17" viewBox="0 0 24 17">
            <path d="M8 0h8q8 1 8 8 0 4-2 5l2 4-6-1H8Q0 16 0 8 0 1 8 0z" fill="#fff"/>
            <path d="M5.500 4.500h3l1-1.500h5l1 1.500h3v8h-13z" fill="none" stroke="#005f98" stroke-width="1.400"/>
            <circle cx="12" cy="8.500" r="2.500" fill="none" stroke="#005f98" stroke-width="1.400"/>
        </svg>
        Report an issue
    </button>

</body>
</html>
```
FILE: styles.css
```css
* {
    box-sizing: border-box;
}

body {
    display: flex;
    flex-direction: column;
    height: 100vh;
    margin: 0;
    overflow: hidden;
    background: #fff;
    color: #333;
    font-family: Lato, sans-serif;
    font-size: 13px;
}

a {
    color: inherit;
    text-decoration: none;
}

button,
input,
select {
    font: inherit;
    cursor: pointer;
}

.sprite {
    position: absolute;
    width: 0;
    height: 0;
}

/* Header */
.header {
    display: flex;
    align-items: flex-start;
    height: 46px;
    border-bottom: 1px solid #e3e3e3;
    border-radius: 0 0 4px 4px;
    color: #3d3833;
}

.brand {
    display: flex;
    flex: 0 0 433px;
    padding-left: 6px;
}

.logo {
    width: 32px;
    height: 32px;
    margin-top: 4px;
}

.lock {
    width: 18px;
    height: 22px;
    margin: 7px 8px 0 17px;
}

.title {
    color: #187caf;
    font-size: 20px;
    line-height: 40px;
    white-space: nowrap;
}

.tabs {
    display: flex;
    gap: 3px;
}

.tabs a {
    position: relative;
    display: flex;
    align-items: center;
    gap: 7px;
    height: 34px;
    padding: 6px 10px 0;
    border-bottom: 3px solid transparent;
    white-space: nowrap;
}

.tabs .active {
    border-bottom-color: #187caf;
}

.beta {
    position: absolute;
    top: 0;
    right: -10px;
    color: #1e8c1e;
    font-size: 9px;
    line-height: 14px;
}

.links {
    display: flex;
    gap: 20px;
    margin-left: auto;
    padding-right: 40px;
    line-height: 40px;
}

.caret::after {
    content: "";
    display: inline-block;
    margin-left: 5px;
    border: 4px solid transparent;
    border-top-color: #3d3833;
    border-bottom: 0;
    vertical-align: 2px;
}

.links .user {
    margin-left: 54px;
}

/* Layout */
.main {
    display: flex;
    flex: 1;
    min-height: 0;
}

.sidebar {
    display: flex;
    flex-direction: column;
    flex: 0 0 318px;
    font-family: "Liberation Sans", Arial, sans-serif;
}

.splitter {
    display: flex;
    align-items: center;
    justify-content: center;
    flex: 0 0 4px;
    background: #e6e6e6;
}

.splitter::after {
    content: "";
    width: 3px;
    height: 7px;
    border: 1px solid #444;
    border-width: 0 1px;
}

.workspace {
    display: flex;
    flex-direction: column;
    flex: 1;
    min-width: 0;
    padding: 0 1px 2px 4px;
}

/* Buttons */
.btn {
    display: flex;
    align-items: center;
    justify-content: center;
    height: 27px;
    padding: 0 9px;
    border: 1px solid #187caf;
    border-radius: 2px;
    background: #fff;
    color: #187caf;
    font-family: Lato, sans-serif;
    font-size: 12px;
    white-space: nowrap;
}

.ic {
    width: 12px;
    height: 12px;
    margin-right: 2px;
}

.sidebar-tools {
    display: flex;
    height: 42px;
    padding-top: 7px;
    border-bottom: 1px solid #ddd;
}

.sidebar-tools .btn-refresh {
    width: 32px;
    margin-left: 1px;
}

.sidebar-tools .btn-download {
    width: 88px;
    border-left: 0;
    border-radius: 0 2px 2px 0;
}

/* Result tree */
.tree {
    flex: 1;
    min-height: 0;
    padding: 10px 0 0 1px;
    white-space: nowrap;
}

.tree ul {
    margin: 0;
    padding: 0;
    list-style: none;
}

.tree ul ul {
    padding-left: 16px;
}

.node {
    display: flex;
    align-items: center;
    gap: 7px;
    height: 18px;
}

.node svg {
    width: 9px;
    height: 9px;
}

.leaf {
    display: flex;
    align-items: center;
    height: 24px;
}

.leaf svg {
    width: 12px;
    height: 12px;
}

.leaf.selected span {
    color: #187caf;
    font-weight: bold;
    text-decoration: underline;
}

.has-menu {
    position: relative;
}

.context-menu {
    position: absolute;
    top: 11px;
    left: 73px;
    z-index: 5;
    width: 189px;
    border: 1px solid #979797;
    background: #fcfcfc;
}

.context-menu button {
    display: block;
    width: 100%;
    height: 22px;
    padding: 0 6px;
    border: 0;
    background: none;
    color: #333;
    text-align: left;
}

.context-menu .highlight {
    width: 189px;
    height: 28px;
    margin: -2px 0 2px -3px;
    padding: 0 7px;
    border: 2px solid #f00;
    background: #e1e6f2;
}

/* Job status */
.jobs {
    flex: 0 0 196px;
    margin-right: 1px;
    border: 1px solid #ddd;
    border-width: 1px 1px 0 0;
    border-radius: 0 4px 0 0;
    overflow: hidden;
}

.jobs h2 {
    height: 38px;
    margin: 0;
    padding-left: 14px;
    border-bottom: 1px solid #ddd;
    background: #f4f4f4;
    color: #187caf;
    font-family: Lato, sans-serif;
    font-size: 13px;
    font-weight: 400;
    line-height: 38px;
}

.jobs-body {
    position: relative;
    margin-right: 2px;
}

.jobs table {
    width: 100%;
    border-collapse: collapse;
    table-layout: fixed;
}

.jobs th {
    height: 26px;
    padding: 0;
    background: #eaeaea;
    color: #444;
    text-align: left;
}

.jobs .col-name {
    width: 139px;
    padding-left: 15px;
}

.jobs .col-status {
    width: 109px;
}

.jobs td {
    height: 41px;
    padding: 2px 0;
    border-bottom: 1px solid #e2e4e6;
    line-height: 18px;
}

.jobs td:first-child {
    padding: 2px 40px 2px 15px;
}

.jobs tbody tr:nth-child(even) {
    background: #f1f5fb;
}

.progress {
    position: relative;
    width: 94px;
    height: 20px;
    border-radius: 4px;
    background: #f4f4f4;
    box-shadow: inset 0 1px 2px rgba(0, 0, 0, 0.1);
    overflow: hidden;
}

.progress i {
    position: absolute;
    top: 0;
    bottom: 0;
    left: 0;
    width: 50%;
    background: #337ab7 linear-gradient(45deg, rgba(255, 255, 255, .15) 25%, transparent 25%, transparent 50%, rgba(255, 255, 255, .15) 50%, rgba(255, 255, 255, .15) 75%, transparent 75%) 0 0 / 40px 40px;
}

.progress span {
    position: relative;
    padding-left: 1px;
    color: #444;
    font-size: 12px;
    line-height: 20px;
}

.actions {
    display: flex;
    gap: 4px;
}

.actions button {
    display: flex;
    align-items: center;
    justify-content: center;
    width: 22px;
    height: 19px;
    padding: 0;
    border: 1px solid #187caf;
    border-radius: 2px;
    background: #fff;
    color: #187caf;
}

.actions svg {
    width: 11px;
    height: 11px;
}

.scrollbar {
    position: absolute;
    top: 26px;
    right: 0;
    width: 15px;
    height: 130px;
    padding: 14px 2px;
    background: rgba(240, 240, 240, 0.7);
}

.scrollbar i {
    display: block;
    height: 82px;
    background: rgba(180, 180, 180, 0.6);
}

.scrollbar::before,
.scrollbar::after {
    content: "";
    position: absolute;
    left: 4px;
    border: 4px solid transparent;
}

.scrollbar::before {
    top: 5px;
    border-top: 0;
    border-bottom-color: #aaa;
}

.scrollbar::after {
    bottom: 5px;
    border-bottom: 0;
    border-top-color: #777;
}

/* Viewer toolbar */
.toolbar {
    display: flex;
    gap: 10px;
    height: 40px;
    padding-top: 7px;
    font-size: 12px;
}

.select {
    position: relative;
}

.select::after {
    content: "";
    position: absolute;
    top: 50%;
    right: 6px;
    margin-top: -4px;
    border: 3px solid transparent;
    border-top: 6px solid #444;
    border-bottom: 0;
    pointer-events: none;
}

.select select,
.row input {
    width: 100%;
    height: 34px;
    padding: 0 16px;
    border: 1px solid #ccc;
    border-radius: 4px;
    background: #fff;
    box-shadow: inset 0 1px 1px rgba(0, 0, 0, 0.075);
    color: #555;
    appearance: none;
}

.toolbar .select select {
    height: 27px;
    padding: 0 4px;
}

.field-select {
    width: 180px;
    margin-right: 20px;
}

.repr-select {
    width: 130px;
    margin-right: -5px;
}

.tool {
    display: flex;
    align-items: center;
    gap: 5px;
    height: 27px;
    padding: 0 5px;
    border: 1px solid #ccc;
    border-radius: 2px;
    background: #fff;
    color: #187caf;
    white-space: nowrap;
}

.player {
    gap: 14px;
    width: 102px;
    padding: 0 7px;
}

.player input {
    width: 45px;
    height: 18px;
    padding: 0 4px;
    border: 1px solid #ccc;
    border-radius: 2px;
    color: #000;
}

.rescale {
    width: 100px;
}

.viewport-tools {
    gap: 10px;
    width: 137px;
}

.config {
    width: 118px;
}

/* Properties column */
.stage {
    display: flex;
    flex: 1;
    gap: 5px;
    min-height: 0;
}

.panel {
    flex: 0 0 330px;
    border: 1px solid #ccc;
}

.filters {
    display: flex;
    height: 35px;
    padding-top: 2px;
    border-bottom: 1px solid #ccc;
}

.filters .btn {
    justify-content: flex-start;
    gap: 8px;
    width: 100px;
    padding: 0 5px;
}

.filters .delete {
    width: 105px;
}

.colormap {
    width: 13px;
    height: 20px;
    margin: 4px 0 0 4px;
    border: 1px solid #777;
    background: linear-gradient(#f58a1f, #f3c02c 30%, #4bb58c 50%, #2f9ad0 75%, #5560a8);
}

.pipeline {
    height: 200px;
    padding: 2px 8px;
}

.pipeline a {
    display: flex;
    align-items: center;
    gap: 6px;
    color: #187caf;
    font-weight: bold;
    line-height: 16px;
}

.panel-head {
    display: flex;
    align-items: center;
    justify-content: space-between;
    height: 30px;
    margin-right: 2px;
    padding: 0 4px 0 5px;
    border: 1px solid #ccc;
    border-width: 1px 0;
    background: #f4f4f4;
    color: #000;
}

.group {
    display: flex;
    align-items: center;
    gap: 4px;
    height: 16px;
    margin: 0 4px 17px;
    font-size: 13px;
}

.group::before {
    content: "";
    width: 9px;
    height: 3px;
    background: #444;
}

.group-source {
    margin: 21px 4px 51px;
}

.row {
    display: grid;
    grid-template-columns: 109px 1fr;
    margin: 0 15px 7px;
    color: #000;
}

.row label {
    line-height: 34px;
}

.row input {
    margin-top: 3px;
    padding: 0 12px;
}

/* 3D viewport */
.viewer {
    flex: 1;
    min-width: 0;
    border: 1px solid #ccc;
    background: linear-gradient(#fafafa, #d3d3d3);
}

.scene {
    display: block;
    width: 100%;
    height: 100%;
}

.legend {
    fill: #000;
    font-size: 20px;
    font-weight: 300;
}

.legend-title {
    font-size: 22px;
}

.axis-label {
    fill: #fff;
    font-size: 20px;
    font-weight: 400;
}

/* Feedback button */
.report {
    position: absolute;
    right: 30px;
    bottom: 0;
    display: flex;
    align-items: center;
    gap: 11px;
    width: 138px;
    height: 29px;
    padding: 3px 10px 0;
    border: 0;
    border-top: 1px solid #0a78bc;
    border-radius: 3px 3px 0 0;
    background: #005f98;
    color: #fff;
    font-family: "Liberation Sans", Arial, sans-serif;
    font-size: 12px;
    white-space: nowrap;
}
```
